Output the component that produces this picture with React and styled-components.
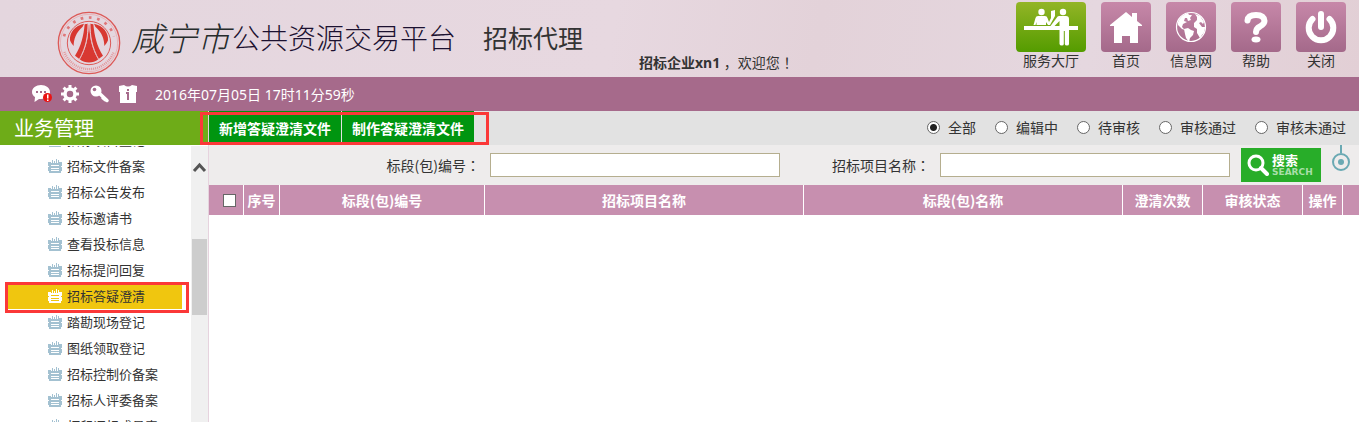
import React, { useState } from "react";
import styled, { createGlobalStyle, css } from "styled-components";

const GlobalStyle = createGlobalStyle`
  *, *::before, *::after { box-sizing: border-box; }
  body {
    margin: 0;
    background: #fff;
    color: #333;
    font: 14px/20px "Noto Sans CJK SC", "Noto Sans", sans-serif;
  }
  h1, h2, p, ul { margin: 0; padding: 0; font-weight: 400; }
  ul { list-style: none; }
  a { color: inherit; text-decoration: none; }
  button, input { font: inherit; margin: 0; }
  svg { display: block; flex: none; }
`;

const Page = styled.div`
  display: flex;
  flex-direction: column;
  height: 100vh;
`;

const Header = styled.header`
  display: flex;
  flex: none;
  height: 77px;
  padding: 0 13px 0 57px;
  background: linear-gradient(100deg, #e4d6de, #e7d8e0 45%, #e3d2d9 60%, #e5d7df 80%, #e2cfd5);
`;

const Brand = styled.div`
  display: flex;
  align-items: center;
  padding-top: 9px;
`;

const SiteName = styled.h1`
  display: flex;
  align-items: center;
  gap: 2px;
  margin-left: 10px;
  padding-bottom: 12px;
  line-height: 40px;
  white-space: nowrap;
  font-weight: 300;
`;

const City = styled.span`
  font-size: 33px;
  font-style: italic;
  color: #262c2c;
`;

const Platform = styled.span`
  font-size: 28px;
  color: #1c1130;
`;

const Role = styled.p`
  margin-left: 27px;
  padding-bottom: 12px;
  font-size: 25px;
  line-height: 40px;
  white-space: nowrap;
`;

const Welcome = styled.p`
  align-self: flex-end;
  margin-left: 56px;
  padding-bottom: 4px;
  font-family: "Noto Sans", "Noto Sans CJK SC", sans-serif;
  white-space: nowrap;
`;

const Punct = styled.span`
  font-family: "Noto Sans CJK TC", sans-serif;
`;

const QuickNav = styled.nav`
  display: flex;
  gap: 15px;
  margin-left: auto;
  padding-top: 2px;
`;

const QuickLink = styled.a`
  display: flex;
  flex-direction: column;
  align-items: center;
  width: ${(p) => (p.$wide ? 70 : 50)}px;
  line-height: 16px;
  white-space: nowrap;
`;

const Tile = styled.span`
  display: flex;
  align-items: center;
  justify-content: center;
  width: 100%;
  height: 50px;
  border-radius: 4px;
  background: ${(p) =>
    p.$wide ? "linear-gradient(#93b526, #549c00)" : "linear-gradient(#c788a9, #a4698a)"};
`;

const StatusBar = styled.div`
  display: flex;
  flex: none;
  align-items: center;
  height: 34px;
  padding-left: 31px;
  background: #a66a8b;
  color: #fff;
`;

const ToolButton = styled.button`
  width: 22px;
  height: 22px;
  margin-right: 7px;
  padding: 0;
  border: 0;
  background: none;
`;

const Clock = styled.time`
  margin-left: 8px;
  padding-top: 2px;
  font-family: "Noto Sans", "Noto Sans CJK SC", sans-serif;
`;

const Workspace = styled.div`
  display: flex;
  flex: 1;
  min-height: 0;
`;

const Sidebar = styled.aside`
  display: flex;
  flex-direction: column;
  flex: none;
  width: 208px;
`;

const SidebarTitle = styled.h2`
  flex: none;
  height: 34px;
  padding-left: 14px;
  background: #6eac18;
  color: #fff;
  font-size: 20px;
  line-height: 34px;
`;

const MenuPane = styled.div`
  display: flex;
  flex: 1;
  min-height: 0;
  border-top: 1px solid #fff;
  overflow: hidden;
`;

const Menu = styled.ul`
  flex: 1;
  margin-top: -18px;
  padding: 0 9px 0 8px;
`;

const mark = css`
  content: "";
  position: absolute;
  border: 3px solid #fb3838;
  pointer-events: none;
`;

const MenuItem = styled.li`
  position: relative;
  height: 26px;
  padding: 1px 0;
  ${(p) =>
    p.$active &&
    css`
      &::after {
        ${mark}
        inset: -2px -7px -3px -3px;
      }
    `}
`;

const MenuLink = styled.a`
  display: flex;
  align-items: center;
  gap: 5px;
  height: 24px;
  padding: 0 0 2px 40px;
  background: ${(p) => (p.$active ? "#f0c60f" : "none")};
  color: #333;
  font-size: 13px;
  white-space: nowrap;
`;

const ScrollTrack = styled.div`
  flex: none;
  width: 17px;
  padding: 15px 1px 0;
  background: #f0f0f0;
`;

const ScrollThumb = styled.div`
  height: 76px;
  margin-top: 66px;
  background: #cdcdcd;
`;

const Content = styled.main`
  flex: 1;
  min-width: 0;
  border-left: 1px solid #e6d3de;
`;

const Toolbar = styled.div`
  display: flex;
  align-items: center;
  justify-content: space-between;
  height: 34px;
  padding-right: 13px;
  background: #e2e2e2;
`;

const Actions = styled.div`
  position: relative;
  display: flex;
  align-self: stretch;
  &::after {
    ${mark}
    inset: 1px -14px 0 -9px;
  }
`;

const ActionButton = styled.button`
  padding: 0 10px;
  border: 0;
  border-right: 1px solid #e2e2e2;
  background: #009510;
  color: #fff;
  font-weight: 700;
  line-height: 34px;
  white-space: nowrap;
`;

const Filters = styled.div`
  display: flex;
  gap: 19px;
`;

const Option = styled.label`
  display: flex;
  align-items: center;
  gap: 8px;
  line-height: 18px;
  padding-bottom: 2px;
  white-space: nowrap;
`;

const Radio = styled.input`
  appearance: none;
  width: 13px;
  height: 13px;
  border: 1px solid #666;
  border-radius: 50%;
  background: #fff;
  &:checked {
    background: radial-gradient(circle, #222 0 3px, #fff 4px);
  }
`;

const SearchForm = styled.form`
  display: flex;
  align-items: center;
  justify-content: flex-end;
  height: 40px;
  padding-right: 9px;
  background: #eeecec;
`;

const Field = styled.label`
  display: flex;
  align-items: center;
  gap: 10px;
  margin-left: 52px;
  white-space: nowrap;
`;

const TextBox = styled.input`
  width: 290px;
  height: 24px;
  border: 1px solid #b5ae8f;
  background: #fff;
`;

const SearchButton = styled.button`
  display: flex;
  align-items: center;
  gap: 3px;
  width: 80px;
  height: 34px;
  margin: 0 11px;
  padding: 0 0 0 6px;
  border: 0;
  background: #28ad29;
  color: #fff;
`;

const SearchCaption = styled.span`
  display: flex;
  flex-direction: column;
  text-align: left;
  font-size: 13px;
  font-weight: 700;
  line-height: 14px;
`;

const SearchLatin = styled.small`
  color: #a9dfa9;
  font: 700 9px/10px "DejaVu Sans", sans-serif;
`;

const Grid = styled.table`
  width: 100%;
  table-layout: fixed;
  border-collapse: separate;
  border-spacing: 0;
`;

const Th = styled.th`
  width: ${(p) => (p.$w ? p.$w + "px" : "auto")};
  height: 30px;
  padding: 0;
  border-right: 1px solid #fff;
  background: #c78faf;
  color: #fff;
  font-weight: 700;
  white-space: nowrap;
  &:last-child { border-right: 0; }
`;

const CheckBox = styled.input`
  appearance: none;
  display: block;
  width: 13px;
  height: 13px;
  margin-left: 14px;
  border: 1px solid #666;
  background: #fff;
  &:checked { box-shadow: inset 0 0 0 2px #fff; background: #333; }
`;

function Seal() {
  return (
    <svg width="64" height="64" viewBox="22 19 192 192" fill="none" aria-hidden="true">
      <circle cx="118" cy="115" r="92" stroke="#dc5a58" strokeWidth="4" />
      <circle cx="118" cy="115" r="86" stroke="#e9a5a7" strokeWidth="2" />
      <path d="M43 95A78 78 0 0 1 193 95" stroke="#df7779" strokeWidth="8" strokeDasharray="8 17" />
      <path d="M44 142A79 79 0 0 0 192 142" stroke="#e39599" strokeWidth="7" strokeDasharray="3 3" />
      <circle cx="118" cy="115" r="65" stroke="#dc5a58" strokeWidth="3" />
      <g fill="#d83831">
        <path d="M103 57C76 62 59 84 61 107C64 115 68 120 72 124C72 103 79 83 99 66Z" />
        <path d="M133 57C160 62 177 84 175 107C172 115 168 120 164 124C164 103 157 83 137 66Z" />
        <path d="M105 59L115 57C115 92 110 128 90 164L76 153C95 125 102 92 105 59Z" />
        <path d="M131 59L121 57C121 92 126 128 146 164L160 153C141 125 134 92 131 59Z" />
        <path d="M117 60h2C120 105 128 134 146 164C130 177 106 177 90 164C108 134 116 105 117 60Z" />
      </g>
      <path d="M115 57C115 92 110 128 88 166M121 57C121 92 126 128 148 166" stroke="#e9c4cb" strokeWidth="3" />
    </svg>
  );
}

function HallIcon() {
  return (
    <svg width="54" height="38" viewBox="0 0 54 38" fill="#fff" aria-hidden="true">
      <circle cx="17.500" cy="4" r="3.200" />
      <path d="M14 8h7q2 0 2.500 2l1.500 4 2-4V3l4-1v6l-5 9h-2l-2-3v3H12.500v-3l-1 3H9.500l2-7q.5-2 2.500-2z" />
      <circle cx="39" cy="4" r="3.200" />
      <path d="M35 8h7q3 0 3 3v25q0 1.500-2 1.500T40.800 36V23h-1v13q0 1.500-2 1.500T35.500 36V13l-5 5h-4l6-8q1-2 2.500-2z" />
      <path d="M0 18h54v4H0z" />
    </svg>
  );
}

function HomeIcon() {
  return (
    <svg width="34" height="34" viewBox="0 0 34 34" fill="#fff" aria-hidden="true">
      <path d="M17 2L23 7V3h5v8l5 4v1h-4v17h-8v-7h-8v7H5V16H1v-1z" />
    </svg>
  );
}

function EarthIcon() {
  return (
    <svg width="32" height="32" viewBox="0 0 32 32" fill="#fff" aria-hidden="true">
      <circle cx="16" cy="16" r="14.500" fill="none" stroke="#fff" strokeWidth="1.200" />
      <path d="M3 11Q6 4 13 2l1 2 3 0-2 3 1 2-3 1-1-3-2 0-1 3 3 1-4 2-1 3 3 3-3-1-4-4z" />
      <path d="M9 18l4-1 3 2 3 1-1 4-3 3-1 4-3-4-1-4z" />
      <path d="M20 3l5 2 4 6-1 2-2-2-2 1 3 4 3 0q0 5-3 8l-2 3-3-5 0-4-3-2 0-4 3-3 0-3z" />
    </svg>
  );
}

function HelpIcon() {
  return (
    <svg width="28" height="32" viewBox="0 0 28 32" fill="none" aria-hidden="true">
      <path d="M5.500 9.500Q6 4 14 4T22.500 10Q22.500 13 18 15.500Q14 17.500 14 21" stroke="#fff" strokeWidth="6" strokeLinecap="round" />
      <ellipse cx="14" cy="28.500" rx="4.500" ry="3" fill="#fff" />
    </svg>
  );
}

function PowerIcon() {
  return (
    <svg width="32" height="34" viewBox="0 0 32 34" fill="none" stroke="#fff" strokeWidth="6" strokeLinecap="round" aria-hidden="true">
      <path d="M7.500 9A12.300 12.300 0 1 0 24.500 9M16 4V17" />
    </svg>
  );
}

function MessageIcon() {
  return (
    <svg width="22" height="22" viewBox="0 0 22 22" aria-hidden="true">
      <path d="M10 2C5 2 1 5 1 9C1 11.500 2.500 13 4 14L3.500 19L8 16H10C15 16 19 13 19 9S15 2 10 2Z" fill="#fff" />
      <path d="M5 8h2v2H5zM9 8h2v2H9zM13 8h2v2h-2z" fill="#a66a8b" />
      <circle cx="16.500" cy="14.500" r="4.500" fill="#e91414" />
      <path d="M16 11.500h1.500v4H16zM16 16.500h1.500V18H16z" fill="#fff" />
    </svg>
  );
}

function GearIcon() {
  return (
    <svg width="22" height="22" viewBox="0 0 22 22" fill="none" stroke="#fff" aria-hidden="true">
      <circle cx="10" cy="11" r="5" strokeWidth="3.500" />
      <path d="M10 5V2M10 17v3M4 11H1M16 11h3M5.800 6.800L3.600 4.600M14.200 6.800l2.200-2.200M5.800 15.200l-2.200 2.200M14.200 15.200l2.200 2.200" strokeWidth="3" />
    </svg>
  );
}

function KeyIcon() {
  return (
    <svg width="22" height="22" viewBox="0 0 22 22" aria-hidden="true">
      <circle cx="7" cy="8" r="5.500" fill="#fff" />
      <circle cx="5.500" cy="6.500" r="1.800" fill="#a66a8b" />
      <path d="M10 10L18 17.500M14 15l2.500 2" stroke="#fff" strokeWidth="3.500" strokeLinecap="round" />
    </svg>
  );
}

function ShirtIcon() {
  return (
    <svg width="22" height="22" viewBox="0 0 22 22" fill="#fff" aria-hidden="true">
      <path d="M1 3l5-1q4 3 8 0l5 1v6h-1v11H2V9H1z" />
      <path d="M9 6h2v2H9zM8 9h3v8H9v-6H8z" fill="#a66a8b" />
    </svg>
  );
}

function NoteIcon({ color }) {
  return (
    <svg width="14" height="14" viewBox="0 0 14 14" fill={color} aria-hidden="true">
      <path d="M0 3h3v1h8V3h3v4h-1v1h1v4h-1v2H1v-2H0V8h1V7H0z" />
      <path d="M4 1h1v4H4zM6 2h1v3H6zM8 0h1v5H8zM10 1h1v4h-1z" />
      <path d="M3 6h8v1H3zM3 9h8v1H3zM3 11h8v1H3z" fill={color === "#fff" ? "#f0c60f" : "#fff"} />
    </svg>
  );
}

const quickLinks = [
  { label: "服务大厅", icon: <HallIcon />, wide: true },
  { label: "首页", icon: <HomeIcon /> },
  { label: "信息网", icon: <EarthIcon /> },
  { label: "帮助", icon: <HelpIcon /> },
  { label: "关闭", icon: <PowerIcon /> },
];

const tools = [
  { label: "消息", icon: <MessageIcon /> },
  { label: "设置", icon: <GearIcon /> },
  { label: "密码", icon: <KeyIcon /> },
  { label: "换肤", icon: <ShirtIcon /> },
];

const menu = [
  "招标项目登记",
  "招标文件备案",
  "招标公告发布",
  "投标邀请书",
  "查看投标信息",
  "招标提问回复",
  "招标答疑澄清",
  "踏勘现场登记",
  "图纸领取登记",
  "招标控制价备案",
  "招标人评委备案",
  "打印评标成员表",
];

const filters = ["全部", "编辑中", "待审核", "审核通过", "审核未通过"];

const columns = [
  ["序号", 36],
  ["标段(包)编号", 205],
  ["招标项目名称"],
  ["标段(包)名称"],
  ["澄清次数", 80],
  ["审核状态", 100],
  ["操作", 40],
  ["", 16],
];

export default function App() {
  const [filter, setFilter] = useState("全部");
  const current = "招标答疑澄清";
  return (
    <Page>
      <GlobalStyle />
      <Header>
        <Brand>
          <Seal />
          <SiteName>
            <City>咸宁市</City>
            <Platform>公共资源交易平台</Platform>
          </SiteName>
          <Role>招标代理</Role>
        </Brand>
        <Welcome>
          <b>招标企业xn1</b> ，欢迎您<Punct>！</Punct>
        </Welcome>
        <QuickNav>
          {quickLinks.map((q) => (
            <QuickLink key={q.label} href="#" $wide={q.wide}>
              <Tile $wide={q.wide}>{q.icon}</Tile>
              {q.label}
            </QuickLink>
          ))}
        </QuickNav>
      </Header>
      <StatusBar>
        {tools.map((t) => (
          <ToolButton key={t.label} type="button" aria-label={t.label}>
            {t.icon}
          </ToolButton>
        ))}
        <Clock dateTime="2016-07-05T17:11:59">2016年07月05日 17时11分59秒</Clock>
      </StatusBar>
      <Workspace>
        <Sidebar>
          <SidebarTitle>业务管理</SidebarTitle>
          <MenuPane>
            <Menu>
              {menu.map((name) => (
                <MenuItem key={name} $active={name === current}>
                  <MenuLink href="#" $active={name === current}>
                    <NoteIcon color={name === current ? "#fff" : "#a3c1d1"} />
                    {name}
                  </MenuLink>
                </MenuItem>
              ))}
            </Menu>
            <ScrollTrack>
              <svg width="15" height="12" viewBox="0 0 15 12" fill="none" stroke="#555" strokeWidth="3" aria-hidden="true">
                <path d="M2 10L7.500 4L13 10" />
              </svg>
              <ScrollThumb />
            </ScrollTrack>
          </MenuPane>
        </Sidebar>
        <Content>
          <Toolbar>
            <Actions>
              <ActionButton type="button">新增答疑澄清文件</ActionButton>
              <ActionButton type="button">制作答疑澄清文件</ActionButton>
            </Actions>
            <Filters role="radiogroup">
              {filters.map((f) => (
                <Option key={f}>
                  <Radio type="radio" name="status" checked={filter === f} onChange={() => setFilter(f)} />
                  {f}
                </Option>
              ))}
            </Filters>
          </Toolbar>
          <SearchForm onSubmit={(e) => e.preventDefault()}>
            <Field>
              <span>
                标段(包)编号<Punct>：</Punct>
              </span>
              <TextBox type="text" />
            </Field>
            <Field>
              <span>
                招标项目名称<Punct>：</Punct>
              </span>
              <TextBox type="text" />
            </Field>
            <SearchButton type="submit">
              <svg width="22" height="22" viewBox="0 0 22 22" fill="none" stroke="#fff" aria-hidden="true">
                <circle cx="9" cy="9" r="7" strokeWidth="3" />
                <path d="M14 14l6 6" strokeWidth="4" strokeLinecap="round" />
              </svg>
              <SearchCaption>
                搜索
                <SearchLatin>SEARCH</SearchLatin>
              </SearchCaption>
            </SearchButton>
            <svg width="18" height="40" viewBox="0 0 18 40" fill="none" stroke="#6aa9b3" strokeWidth="2" aria-hidden="true">
              <path d="M9 0V8" />
              <circle cx="9" cy="17" r="8" />
              <circle cx="9" cy="17" r="3" fill="#6aa9b3" stroke="none" />
            </svg>
          </SearchForm>
          <Grid>
            <thead>
              <tr>
                <Th $w={35}>
                  <CheckBox type="checkbox" aria-label="全选" />
                </Th>
                {columns.map(([name, w]) => (
                  <Th key={name} $w={w}>
                    {name}
                  </Th>
                ))}
              </tr>
            </thead>
          </Grid>
        </Content>
      </Workspace>
    </Page>
  );
}
